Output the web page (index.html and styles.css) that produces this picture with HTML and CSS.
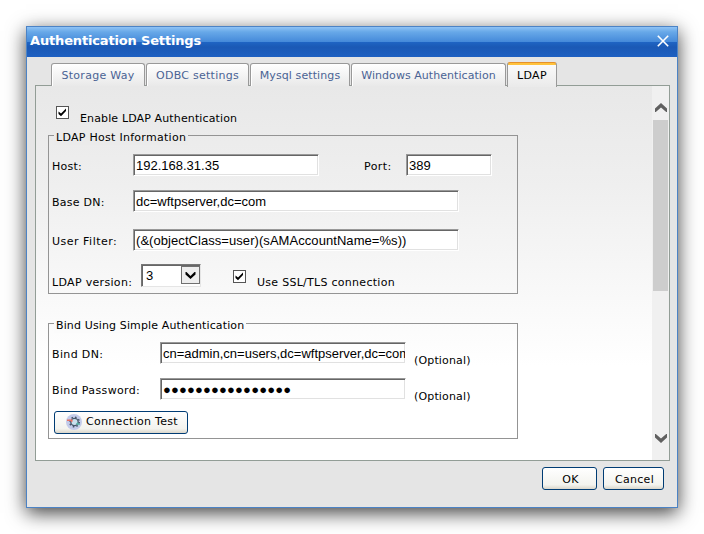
FILE: index.html
```html
<!DOCTYPE html>
<html lang="en">
<head>
<meta charset="utf-8">
<title>Authentication Settings</title>
<link rel="stylesheet" href="styles.css">
</head>
<body>
<div class="dialog">
  <div class="titlebar">
    <span class="title">Authentication Settings</span>
    <svg class="close" width="12" height="12" viewBox="0 0 12 12"><path d="M.8.8 11.2 11.2M11.2.8.8 11.2" stroke="#fff" stroke-width="1.6"/></svg>
  </div>
  <div class="tabs">
    <div class="tab t1"><span>Storage Way</span></div>
    <div class="tab t2"><span>ODBC settings</span></div>
    <div class="tab t3"><span>Mysql settings</span></div>
    <div class="tab t4"><span>Windows Authentication</span></div>
    <div class="tab active"><span>LDAP</span></div>
  </div>
  <div class="panel">
    <div class="content">
      <label class="enable"><span class="check"><svg width="11" height="11" viewBox="0 0 11 11"><path d="M1.500 4.500v2.500L4 9.300 9 4V1.500L4 6.500z"/></svg></span><span class="lbl">Enable LDAP Authentication</span></label>
      <div class="group host">
        <span class="legend">LDAP Host Information</span>
        <div class="row r1"><span class="name">Host:</span><div class="field w186">192.168.31.35</div><span class="port">Port:</span><div class="field w86">389</div></div>
        <div class="row r2"><span class="name">Base DN:</span><div class="field w326">dc=wftpserver,dc=com</div></div>
        <div class="row r3"><span class="name wide">User Filter:</span><div class="field w326"><span class="filter">(&amp;(objectClass=user)(sAMAccountName=%s))</span></div></div>
        <div class="row r4"><span class="name ver">LDAP version:</span><div class="select"><span>3</span><div class="drop"><svg width="17" height="16" viewBox="0 0 17 16"><path d="M3.500 5v2.500l5 4.500 5-4.500V5h-1L8.500 9 4.500 5z"/></svg></div></div>
          <span class="check ssl"><svg width="11" height="11" viewBox="0 0 11 11"><path d="M1.500 4.500v2.500L4 9.300 9 4V1.500L4 6.500z"/></svg></span><span class="lbl use">Use SSL/TLS connection</span></div>
      </div>
      <div class="group bind">
        <span class="legend">Bind Using Simple Authentication</span>
        <div class="row b1"><span class="name">Bind DN:</span><div class="field w246">cn=admin,cn=users,dc=wftpserver,dc=com</div><span class="opt">(Optional)</span></div>
        <div class="row b2"><span class="name">Bind Password:</span><div class="field w246 pw">●●●●●●●●●●●●●●●●</div><span class="opt">(Optional)</span></div>
        <div class="button test"><svg width="16" height="16" viewBox="0 0 16 16"><circle cx="8" cy="8" r="8" fill="#c3cbea"/><circle cx="8.500" cy="8" r="4.800" fill="none" stroke="#46566b" stroke-width="1.400" stroke-dasharray="1.600 2.170"/><circle cx="8.500" cy="8" r="3.700" fill="#c9e0ee" stroke="#46566b" stroke-width="1.300"/><path d="M1 5.500h4V4.500L7 7 5 8.500V7H1z" fill="#e66f64"/><path d="M10 9.500 12 8v1.500h2v1.200h-2v.8z" fill="#54b4a5"/></svg><span>Connection Test</span></div>
      </div>
    </div>
    <div class="scroll">
      <svg width="12" height="9" viewBox="0 0 12 9"><path d="M6 0 12 5.500V9h-.8L6 4.500.8 9H0V5.500z"/></svg>
      <div class="thumb"></div>
      <svg width="12" height="9" viewBox="0 0 12 9"><path d="M6 9 12 3.500V0h-.8L6 4.500.8 0H0V3.500z"/></svg>
    </div>
  </div>
  <div class="footer"><div class="button ok"><span>OK</span></div><div class="button cancel"><span>Cancel</span></div></div>
</div>
</body>
</html>
```
FILE: styles.css
```css
* { box-sizing: border-box; }
body {
  margin: 0;
  padding: 26px;
  height: 534px;
  overflow: hidden;
  background: #fff;
  color: #000;
  font: 11px/14px "DejaVu Sans", sans-serif;
  white-space: nowrap;
}
.dialog {
  width: 652px;
  height: 482px;
  border: 1px solid #4c83c5;
  background: #e5e5e5;
  box-shadow: 0 5px 18px rgba(0, 0, 0, .75);
}
.titlebar {
  height: 30px;
  display: flex;
  justify-content: space-between;
  align-items: flex-start;
  padding: 7px 8px 0 3px;
  background: linear-gradient(#8fc3f5 0, #67a8e8 5px, #4489d9 15px, #1f65c4 15px, #1b59b5 20px, #1e60c2 30px);
}
.title { color: #fff; font-size: 13px; font-weight: bold; letter-spacing: -.16px; }
.close { margin-top: 1px; }
.tabs { height: 29px; padding: 5px 0 0 24px; display: flex; align-items: flex-end; }
.tab {
  height: 23px;
  border: 1px solid #999;
  border-bottom: 0;
  border-radius: 3px 3px 0 0;
  background: linear-gradient(#fff, #e9e9e9);
  color: #4a6394;
  text-align: center;
  padding-top: 5px;
  margin-right: 1px;
  box-shadow: inset 1px 1px 0 #fff;
}
.t1 { width: 94px; letter-spacing: .28px; }
.t2 { width: 103px; letter-spacing: .25px; }
.t3 { width: 100px; letter-spacing: .1px; }
.t4 { width: 155px; letter-spacing: .05px; }
.tab.active {
  position: relative;
  width: 50px;
  height: 25px;
  padding-top: 4px;
  margin-bottom: -1px;
  border-top: 1px solid #e5902a;
  padding-top: 6px;
  background: linear-gradient(#ffc23c 2px, #fafafa 2px, #eaeaea);
  color: #000;
  box-shadow: none;
  letter-spacing: .4px;
}
.panel {
  width: 635px;
  height: 376px;
  margin: -1px 0 0 8px;
  border: 1px solid #929d96;
  display: flex;
  background: linear-gradient(#e8e8e8 0, #efefef 100px, #fff 280px);
}
.content { width: 616px; padding: 20px 0 0 12px; }
.enable { display: flex; height: 29px; padding-left: 8px; }
.check { width: 13px; height: 13px; border: 1px solid #555; background: #fff; }
.check svg { display: block; }
.lbl { margin: 6px 0 0 11px; letter-spacing: .13px; }
.group { position: relative; width: 470px; border: 1px solid #949494; padding-left: 3px; }
.host { height: 159px; }
.bind { height: 116px; margin-top: 29px; }
.legend { position: absolute; top: -5px; left: 5px; padding: 0 2px; background: #ebebeb; line-height: 14px; letter-spacing: .28px; }
.bind .legend { background: #fbfbfb; letter-spacing: .13px; }
.row { display: flex; align-items: flex-start; height: 22px; }
.name { width: 81px; margin-top: 6px; letter-spacing: .25px; }
.name.wide { letter-spacing: .5px; }
.r1 { margin-top: 18px; }
.r2 { margin-top: 14px; }
.r3 { margin-top: 17px; }
.r4 { margin-top: 13px; height: 23px; }
.port { width: 42px; margin: 6px 0 0 45px; letter-spacing: .4px; }
.field {
  height: 22px;
  border: 1px solid;
  border-color: #999 #fff #fff #999;
  box-shadow: inset 1px 1px 0 #666, inset -1px -1px 0 #e1e1e1;
  background: #fff;
  padding: 3px 2px 0;
  font: 13px/16px "Liberation Sans", sans-serif;
  overflow: hidden;
}
.w186 { width: 186px; }
.w86 { width: 86px; }
.w326 { width: 326px; }
.filter { letter-spacing: .06px; }
.w246 { width: 246px; }
.name.ver { width: 89px; margin-top: 12px; letter-spacing: .32px; }
.select {
  width: 60px;
  height: 23px;
  border: 1px solid;
  border-color: #777 #e5e5e5 #e5e5e5 #777;
  box-shadow: inset 1px 1px 0 #666;
  background: #fff;
  display: flex;
  justify-content: space-between;
  padding: 1px 0 0 4px;
  font: 13px/19px "Liberation Sans", sans-serif;
}
.drop { width: 19px; height: 18px; border: 1px solid #707070; background: #eee; }
.drop svg { display: block; }
.ssl { margin: 6px 0 0 32px; }
.use { margin-top: 12px; letter-spacing: .28px; }
.b1 { margin-top: 18px; }
.b2 { margin-top: 14px; }
.bind .name { width: 108px; letter-spacing: .36px; }
.opt { margin: 12px 0 0 8px; letter-spacing: .15px; }
.pw { letter-spacing: .16px; }
.button {
  height: 23px;
  border: 1px solid #003c74;
  border-radius: 3px;
  background: linear-gradient(#fff, #f3f3ee 80%, #dad6ca);
  display: flex;
  justify-content: center;
  align-items: flex-start;
  padding-top: 5px;
  letter-spacing: .3px;
}
.test { width: 134px; margin: 11px 0 0 2px; padding: 2px 0 0 2px; gap: 4px; }
.test span { margin-top: 1px; }
.scroll {
  width: 17px;
  background: #f0f0f0;
  display: flex;
  flex-direction: column;
  align-items: center;
  padding: 17px 0;
}
.scroll svg { fill: #606060; flex: none; }
.thumb { width: 15px; height: 171px; margin: 8px 0 143px; background: #cdcdcd; flex: none; }
.footer { display: flex; justify-content: flex-end; gap: 6px; padding: 6px 13px 0 0; }
.ok { width: 55px; padding-left: 2px; }
.cancel { width: 61px; padding-left: 2px; }
```
